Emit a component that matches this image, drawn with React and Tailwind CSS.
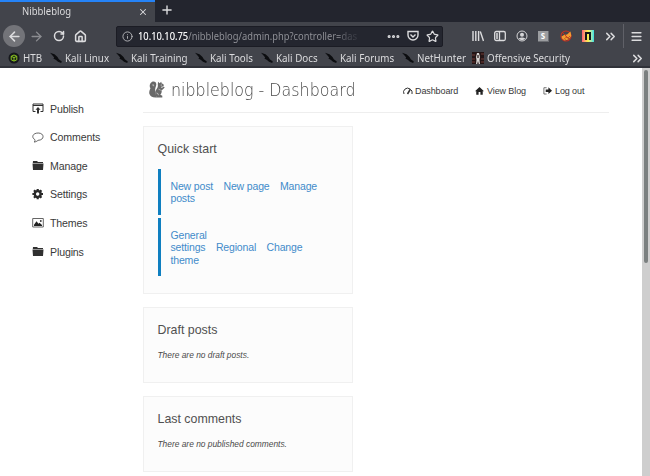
import React from "react";
import { Home, RotateCw, ArrowLeft, ArrowRight, X, Plus, Info, Star, ChevronsRight, Menu, MoreHorizontal } from "lucide-react";

const ui = "font-['Noto_Sans','Open_Sans',sans-serif]";

function Kali() {
  return (
    <svg viewBox="0 0 12 12" className="size-3 shrink-0" fill="#0c0d10">
      <path d="M0 .8 4.500 2.200 7.500 5 8.800 7.200 11.800 9.600 11.200 11 8 9.700 6 8 3.400 6.500 4.200 5.500 2.300 3.300z" />
    </svg>
  );
}

function Htb() {
  return (
    <svg viewBox="0 0 12 12" className="size-3 shrink-0">
      <circle cx="6" cy="6" r="5.500" fill="#15171c" />
      <path d="M3.200 4.300 6 3l2.800 1.300v3.500L6 9.100 3.200 7.800zM3.200 4.300 6 5.600l2.800-1.300M6 5.600V9" fill="none" stroke="#8cc81e" />
    </svg>
  );
}

function Offsec() {
  return (
    <svg viewBox="0 0 12 12" className="size-3 shrink-0">
      <path d="M0 0h12v12H0z" fill="#241516" />
      <path d="M0 3h3M9 2h3M0 7h3M9 7h3M0 10h3M9 10h3" stroke="#713c36" />
      <path d="M5 1h2l1 4-.5 3 .5 4H6.800L6 9l-.8 3H4l.5-4L4 5z" fill="#d8d5d3" />
      <path d="M5.300 3h1.400v3H5.300z" fill="#3a2b2b" />
    </svg>
  );
}

const bookmarks = [
  { label: "HTB", icon: <Htb />, box: "w-[42px]" },
  { label: "Kali Linux", icon: <Kali />, box: "w-[66px]" },
  { label: "Kali Training", icon: <Kali />, box: "w-[79px]" },
  { label: "Kali Tools", icon: <Kali />, box: "w-[66px]" },
  { label: "Kali Docs", icon: <Kali />, box: "w-[64px]" },
  { label: "Kali Forums", icon: <Kali />, box: "w-[77px]" },
  { label: "NetHunter", icon: <Kali />, box: "w-[70px]" },
  { label: "Offensive Security", icon: <Offsec />, box: "w-[110px]" },
];

function Browser() {
  return (
    <header className={`${ui} h-[68px] w-full overflow-hidden border-b-2 border-[#303239] bg-[#42444b] text-[#dcdcde]`}>
      <div className="flex h-[22px] bg-[#23252e]">
        <div className="flex w-[155px] items-center justify-between border-t-2 border-[#2583f7] bg-[#42444b] pr-[7px] pl-[22px]">
          <span className="-mt-[2px] origin-left scale-x-[.825] text-[11.500px] leading-4 whitespace-nowrap">Nibbleblog</span>
          <X size={10} strokeWidth={2.500} />
        </div>
        <Plus size={14} strokeWidth={2.400} className="mt-[3px] ml-[5px]" />
      </div>
      <div className="flex h-[28px] items-center [&>*]:shrink-0">
        <div className="ml-[3px] flex size-[22px] items-center justify-center rounded-full bg-[#737479]">
          <ArrowLeft size={15} strokeWidth={2.500} />
        </div>
        <ArrowRight size={15} strokeWidth={2.200} className="ml-[4px] text-[#8b8c91]" />
        <RotateCw size={12} strokeWidth={3} className="ml-[9px]" />
        <Home size={13} strokeWidth={2.800} className="ml-[9px]" />
        <div className="ml-[29px] flex h-[21px] w-[327px] items-center rounded-[2px] border border-[#1b1c24] bg-[#24262f] pl-[5px] [&>*]:shrink-0">
          <Info size={11} strokeWidth={2} className="text-[#b9babd]" />
          <div className="ml-[5px] flex w-[227px] items-center">
            <span className="origin-left scale-x-[.848] bg-linear-to-r from-[#94959b] from-88% to-[#34363f] bg-clip-text text-[11px] leading-4 whitespace-nowrap text-transparent">
              <span className="text-[#f4f4f5]">10.10.10.75</span>/nibbleblog/admin.php?controller=das
            </span>
          </div>
          <MoreHorizontal size={15} strokeWidth={3} className="ml-[21px]" />
          <svg viewBox="0 0 12 12" className="ml-[6px] size-3" fill="none" stroke="currentColor" strokeWidth="1.400">
            <path d="M1 1.500h10V5a5 5 0 0 1-10 0zM3.500 4.500 6 7l2.500-2.500" />
          </svg>
          <Star size={13} strokeWidth={2.200} className="ml-[7px]" />
        </div>
        <svg viewBox="0 0 12 12" className="ml-[29px] size-3" fill="none" stroke="currentColor" strokeWidth="1.400">
          <path d="M1 1v10M3.800 1v10M6.600 1v10M8.300 1.500 11.500 11" />
        </svg>
        <svg viewBox="0 0 12 12" className="ml-[10px] size-3" fill="none" stroke="currentColor" strokeWidth="1.300">
          <rect x=".7" y="1.500" width="10.600" height="9" rx="1.500" />
          <path d="M5.500 2v8M2 4h2M2 6h2M2 8h2" />
        </svg>
        <svg viewBox="0 0 12 12" className="ml-[10px] size-3">
          <circle cx="6" cy="6" r="5" fill="none" stroke="#d5d5d7" />
          <circle cx="6" cy="4.700" r="2" fill="#d5d5d7" />
          <path d="M2.500 8.500q3.500-2 7 0Q6 12 2.500 8.500" fill="#d5d5d7" />
        </svg>
        <div className="ml-[10px] flex size-[11px] items-center justify-center border-r border-b border-[#6b6d72] bg-[#9b9da0] text-[8px] font-bold text-white">S</div>
        <svg viewBox="0 0 12 12" className="ml-[11px] size-3">
          <circle cx="6" cy="6" r="5" fill="none" stroke="#c92f20" strokeWidth="1.100" />
          <path d="M1.500 6.500 4 5l3-.5 3.500-3 .8 4.500-2.800 3.500-4 1-2.500-2z" fill="#f49b31" />
          <path d="m5 7 3 1 2-2M4 8.500l2 1" fill="none" stroke="#a14a1c" strokeWidth=".7" />
          <path d="m2.300 2.300 7.400 7.400" stroke="#c92f20" strokeWidth=".9" />
        </svg>
        <div className="ml-[10px] flex size-3 items-center justify-center bg-linear-to-r from-[#ff5a76] via-[#fff344] to-[#17dfe5]">
          <svg viewBox="0 0 6 8" className="h-2 w-[6px]"><path d="M0 0h6v8H4V2H2v6H0z" fill="#15151a" /></svg>
        </div>
        <ChevronsRight size={15} strokeWidth={2.300} className="ml-[9px]" />
        <div className="ml-[5px] h-6 w-px bg-[#606168]" />
        <Menu size={13} strokeWidth={3} className="ml-[6px]" />
      </div>
      <div className="flex h-4 items-center pl-2 text-[11px]">
        {bookmarks.map((b) => (
          <div key={b.label} className={`${b.box} flex shrink-0 items-center gap-[3px] whitespace-nowrap`}>
            {b.icon}
            <span className="origin-left scale-x-[.89] leading-4">{b.label}</span>
          </div>
        ))}
        <ChevronsRight size={15} strokeWidth={2.400} className="ml-[48px] shrink-0" />
      </div>
    </header>
  );
}

function FolderIcon() {
  return <svg viewBox="0 0 12 12" className="size-3" fill="#303030"><path d="M1 1h4l1 1h5v1H.8zM.5 3.500h11L11 10H1z" /></svg>;
}

const menu = [
  ["Publish", <svg viewBox="0 0 12 12" className="size-3" fill="none" stroke="#303030"><path d="M3.500 8.500H1V1h10v7.500H8.500M1 2.500h10" /><path d="M6 4 3.500 6.700H5V10.500h2V6.700h1.500z" fill="#303030" stroke="none" /></svg>],
  ["Comments", <svg viewBox="0 0 12 12" className="size-3" fill="none" stroke="#555" strokeWidth=".9"><path d="M6.200 1c6.500 0 6.500 7.300-.2 7.300-1 1-2.500 1.700-4 1.700 1-.8 1.200-1.500.8-2.400C-.8 5.500.5 1 6.200 1z" /></svg>],
  ["Manage", <FolderIcon />],
  ["Settings", <svg viewBox="0 0 12 12" className="size-3" fill="none" stroke="#292929"><circle cx="5.700" cy="5" r="2.900" strokeWidth="2.400" /><path d="M5.700 0v2M5.700 8.300v2M.4 5h2M9 5h2M2 1.300l1.400 1.400M8 7.300l1.400 1.400M2 8.700l1.400-1.400M8 2.700l1.400-1.400" strokeWidth="2.200" /></svg>],
  ["Themes", <svg viewBox="0 0 12 12" className="size-3"><path d="M.7 1.500h10.600v8.500H.7z" fill="none" stroke="#666" /><path d="M2 9V7.800l2.500-3.500 2 2.500 1-1L10 8v1z" fill="#222" /><circle cx="8.800" cy="4" r=".9" fill="#333" /></svg>],
  ["Plugins", <FolderIcon />],
];

function Squirrel() {
  return (
    <svg viewBox="0 0 16 17" className="h-[17px] w-4" fill="#696969">
      <path d="M1.500 7C-.2 6 1 .5 4.500.5 7 .5 7.800 2.500 7 5c-.6 2-1 3-.8 5 .1 2.500.8 4 1.800 6.500-4 .6-7-1-7.700-4C0 10.500.8 9 1.500 7z" />
      <path d="M8.800 3.500 9 .8l1.700 1.400L12.200.8l.5 1.700c1.500.3 2.300 1.200 2.100 2-.3 1-1.600 1.100-2.700 1.300l.6 1.200 2-1.500 1 .9-2.200 2.400-1 .2c.6 1.800 0 3.600-1.200 4.800l2 .9v1.800H8c-1.500-2-2.300-4-1.600-6.200.5-1.500 3-3.500 2.400-6.800z" />
      <path d="M3.200 4q2-1 1.500 1.200M9.500 8.200l2.200 1M7.500 12q1.800 0 2 2.200" fill="none" stroke="#fff" strokeWidth=".5" />
      <circle cx="12.200" cy="4" r=".5" fill="#fff" />
    </svg>
  );
}

function Card({ title, className, children }) {
  return (
    <section className={`w-[210px] border border-[#f0f0f0] bg-[#fcfcfc] px-[13.500px] pt-[12px] ${className}`}>
      <h2 className="text-[12.400px] leading-5 text-[#505050]">{title}</h2>
      {children}
    </section>
  );
}

export default function App() {
  return (
    <div className="flex h-[476px] w-[650px] flex-col overflow-hidden bg-white font-['Liberation_Sans',Arial,sans-serif]">
      <Browser />
      <div className="flex min-h-0 flex-1">
        <nav className="flex w-[143px] flex-col pt-[31px] pl-8 text-[10.600px] tracking-[-0.14px] text-[#3a3a3a]">
          {menu.map(([label, icon]) => (
            <div key={label} className="mb-[8.600px] flex h-5 items-center gap-[6px]">
              {icon}<span className="pt-px">{label}</span>
            </div>
          ))}
        </nav>
        <main className="w-[466px] shrink-0">
          <div className="flex h-[45px] items-start border-b border-[#eee]">
            <div className="mt-[13px] ml-[6px]"><Squirrel /></div>
            <h1 className="mt-[10px] ml-[6px] w-[232px] origin-left scale-x-[.934] text-[17px] leading-6 font-extralight whitespace-nowrap text-[#484848] [font-family:'DejaVu_Sans_Light','DejaVu_Sans','Open_Sans',sans-serif]">nibbleblog - Dashboard</h1>
            <div className="mt-[16px] flex text-[9px] leading-[14px] tracking-[-0.1px] whitespace-nowrap text-[#383838]">
              <span className="flex w-[72px] items-center gap-[2px]">
                <svg viewBox="0 0 10 10" className="size-[10px]" fill="none" stroke="#333"><path d="M1 8a4 4 0 0 1 6-5M8.300 4Q9.500 5.500 9 8" /><path d="m4.500 8 3-5" strokeWidth="1.500" /></svg>Dashboard
              </span>
              <span className="flex w-[69px] items-center gap-[3px]">
                <svg viewBox="0 0 10 10" className="size-[9px]" fill="#222"><path d="m5 0 5 4.700H8.600V8.500H6v-3H4v3H1.400V4.700H0z" /></svg>View Blog
              </span>
              <span className="-ml-px flex items-center gap-[3px]">
                <svg viewBox="0 0 10 10" className="size-[9px]"><path d="M4 .8H1v7h3" fill="none" stroke="#666" /><path d="M3 2.700h3V.3l4 3.800-4 3.800V5.500H3z" fill="#222" /></svg>Log out
              </span>
            </div>
          </div>
          <div className="flex flex-col pt-[13px]">
            <Card title="Quick start" className="h-[168px]">
              <div className="mt-[10px] h-[46px] border-l-[3px] border-[#0f7fc0] pt-[11px] pl-[10px] text-[10.500px] leading-[12.400px] tracking-[-0.16px] text-[#428bca]">
                <a className="mr-[10.500px]">New post</a><a className="mr-[10.500px]">New page</a><a>Manage<br />posts</a>
              </div>
              <div className="mt-[3px] h-[58px] border-l-[3px] border-[#0f7fc0] pt-[11px] pl-[10px] text-[10.500px] leading-[12.400px] tracking-[-0.16px] text-[#428bca]">
                <a className="mr-[10.500px]">General<br />settings</a><a className="mr-[10.500px]">Regional</a><a>Change<br />theme</a>
              </div>
            </Card>
            <Card title="Draft posts" className="mt-[13px] h-[76px]">
              <p className="mt-[9px] text-[8.400px] leading-3 text-[#4a4a4a] italic">There are no draft posts.</p>
            </Card>
            <Card title="Last comments" className="mt-[13px] h-[76px]">
              <p className="mt-[9px] text-[8.400px] leading-3 text-[#4a4a4a] italic">There are no published comments.</p>
            </Card>
          </div>
        </main>
        <div className="ml-auto flex w-2 justify-center bg-[#cecece] pt-[2px]">
          <div className="h-[193px] w-[4px] rounded-full bg-[#7b8080]" />
        </div>
      </div>
    </div>
  );
}
